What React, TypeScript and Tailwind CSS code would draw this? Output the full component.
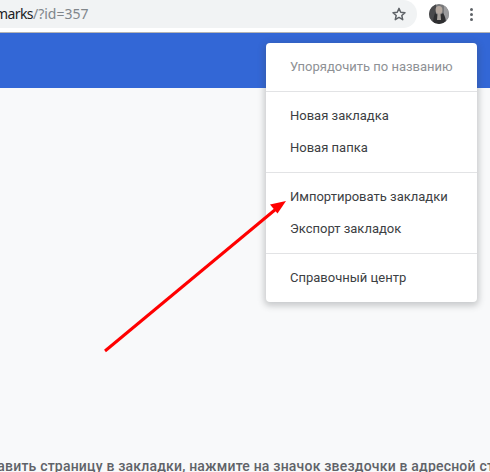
function Divider() {
  return <div className="h-px bg-[#e2e3e5] my-[8px]" />;
}

function Item({ label, muted }: { label: string; muted?: boolean }) {
  return (
    <div className={`h-[32px] pl-[24px] flex items-center text-[13px] whitespace-nowrap ${muted ? "text-[#8e9195]" : "text-[#3c4043]"}`}>
      {label}
    </div>
  );
}

export default function App() {
  return (
    <div className="relative w-[490px] h-[472px] overflow-hidden bg-[#f8f9fa] flex flex-col font-['Roboto',sans-serif]">
      <div className="h-[32px] bg-white shrink-0 flex items-start">
        <div className="w-[417px] h-[28px] bg-[#f1f3f4] rounded-r-[14px] flex items-center justify-between pr-[10px] overflow-hidden">
          <div className="text-[14px] whitespace-nowrap font-['Noto_Sans',sans-serif] -ml-[5px] -mt-[1px]">
            <span className="text-[#202124] tracking-[-0.6px]">marks</span>
            <span className="text-[#80868b]">/?id=357</span>
          </div>
          <svg width="16" height="16" viewBox="0 0 24 24" fill="none" stroke="#5f6368" strokeWidth="2.2" strokeLinejoin="round">
            <path d="M12 3.5l2.6 5.9 6.4.6-4.8 4.2 1.4 6.3L12 17.2l-5.6 3.3 1.4-6.3L3 10l6.4-.6z" />
          </svg>
        </div>
        <div className="ml-[12px] mt-[4px] w-[20px] h-[20px] rounded-full overflow-hidden shrink-0">
          <svg width="20" height="20" viewBox="0 0 20 20">
            <rect width="20" height="20" fill="#77787a" />
            <rect x="0" y="0" width="7" height="20" fill="#4a4a4c" />
            <rect x="15" y="0" width="5" height="20" fill="#9b9b9d" />
            <ellipse cx="10" cy="6" rx="3.4" ry="4" fill="#b5a9a0" />
            <path d="M6 9c-1 3-2 6-2 11h13c0-5-1-8-3-11-2 2-6 2-8 0z" fill="#2e2e30" />
            <path d="M8.5 10h3l.5 6h-4z" fill="#a8a29c" />
          </svg>
        </div>
        <div className="ml-[21px] mt-[8px] flex flex-col gap-[2px] shrink-0">
          <div className="w-[3px] h-[3px] rounded-full bg-[#5f6368]" />
          <div className="w-[3px] h-[3px] rounded-full bg-[#5f6368]" />
          <div className="w-[3px] h-[3px] rounded-full bg-[#5f6368]" />
        </div>
      </div>
      <div className="h-px bg-[#b4b4b4] shrink-0" />
      <div className="h-[55px] bg-[#3367d6] shrink-0" />
      <div className="flex-1 flex flex-col justify-end items-center overflow-hidden">
        <div className="whitespace-nowrap text-[14px] font-medium text-[#5f6368] tracking-[0.2px] -mb-[5px] -ml-[36px]">
          Чтобы добавить страницу в закладки, нажмите на значок звездочки в адресной строке.
        </div>
      </div>

      <div className="absolute left-[266px] top-[43px] w-[211px] h-[259px] bg-white rounded-[4px] shadow-[0_2px_6px_2px_rgba(60,64,67,0.25)] pt-[8px]">
        <Item label="Упорядочить по названию" muted />
        <Divider />
        <Item label="Новая закладка" />
        <Item label="Новая папка" />
        <Divider />
        <Item label="Импортировать закладки" />
        <Item label="Экспорт закладок" />
        <Divider />
        <Item label="Справочный центр" />
      </div>

      <svg className="absolute left-0 top-0" width="490" height="472" viewBox="0 0 490 472" fill="none">
        <line x1="105" y1="351" x2="276" y2="209" stroke="#ff0000" strokeWidth="3" />
        <path d="M286 201l-16 3.5 7.5 9z" fill="#ff0000" />
      </svg>
    </div>
  );
}
